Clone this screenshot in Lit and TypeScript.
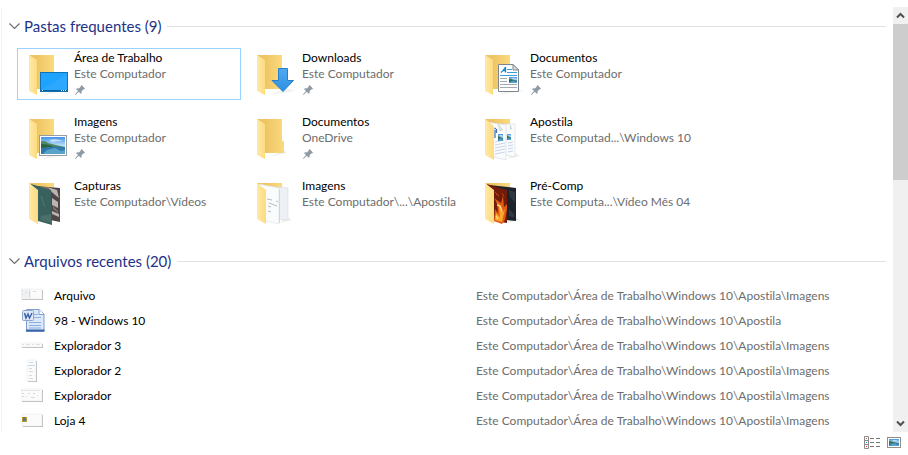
import { LitElement, html, svg, css, type SVGTemplateResult } from "lit";
import { customElement } from "lit/decorators.js";
import { classMap } from "lit/directives/class-map.js";

interface Folder {
  name: string;
  place: string;
  icon: SVGTemplateResult;
  pinned?: boolean;
  selected?: boolean;
}

interface RecentFile {
  name: string;
  path: string;
  icon: SVGTemplateResult;
}

const folderBack = svg`
  <path d="M14 45L40 41L30 38Z" fill="#000" opacity=".05"/>
  <path d="M1 5H26V39H9Z" fill="url(#back)"/>`;
const folderFlap = svg`<path d="M1 5L9 10V45L1 41Z" fill="url(#flap)"/>`;
const filledFlap = svg`<path d="M1 5L10 12V46L1 41Z" fill="url(#flap)"/>`;

const landscape = (x: number, y: number, w: number, h: number) => svg`
  <svg x=${x} y=${y} width=${w} height=${h} viewBox="0 0 24 17" preserveAspectRatio="none">
    <rect width="24" height="17" fill="url(#sky)"/>
    <path d="M0 4.500Q4 3 7 6Q14 8 24 10V11H0Z" fill="#4d8a63"/>
    <path d="M0 7Q8 7 13 10L0 11.500Z" fill="#2c6440"/>
    <path d="M0 11Q12 9 24 10V17H0Z" fill="#2f78ac"/>
    <path d="M6 13L14 11L20 14L24 13V17H2Z" fill="#75bfd8" opacity=".6"/>
    <path d="M8 3Q15 1 22 4Q16 4 11 5Z" fill="#fff" opacity=".6"/>
  </svg>`;

const desktopIcon = svg`${folderBack}${folderFlap}
  <rect x="12.500" y="22.500" width="27" height="19" fill="#1ea3ff" stroke="#0f72b5"/>
  <path d="M13 40L39 24V40Z" fill="#39adff" opacity=".5"/>
  <path d="M13 40.500H39" stroke="#0b5f9c"/>
  <path d="M14 40.500h1M33 40.500h1M35 40.500h1M37 40.500h1" stroke="#fff"/>`;

const downloadsIcon = svg`${folderBack}${folderFlap}
  <path d="M22.500 18.500H31.500V30.500H37.500L27 41.500L16 30.500H22.500Z" fill="url(#arrow)" stroke="#2680c9"/>`;

const documentsIcon = svg`${folderBack}${folderFlap}
  <path d="M14.500 14.500H29L34.500 20V41.500H14.500Z" fill="#fff" stroke="#7d868c"/>
  <path d="M29 14.500V20H34.500Z" fill="#dfe4e7" stroke="#7d868c"/>
  <path d="M17 22.500Q20 20 21.500 17V22.500M19 20.500H22" fill="none" stroke="#1886c8" stroke-width="1.300"/>
  <path d="M23 19.500H28M23 22.500H33M16 25.500H33" stroke="#3aa0dc"/>
  <path d="M16 28.500H23M16 31.500H23M16 34.500H33M16 37.500H33" stroke="#a3a9ad"/>
  ${landscape(25, 27, 8, 6)}`;

const picturesIcon = svg`${folderBack}${folderFlap}
  <rect x="11.500" y="21.500" width="27" height="20" fill="#fff" stroke="#979da2"/>
  ${landscape(13, 23, 24, 17)}`;

const plainIcon = svg`
  <path d="M14 43L31 39L28 36Z" fill="#000" opacity=".06"/>
  <path d="M1 5H26V26L28 28V39H9Z" fill="url(#back)"/>
  ${folderFlap}`;

const pagesIcon = svg`
  <path d="M23 45L36 42L31 39Z" fill="#000" opacity=".07"/>
  <path d="M1 5H26V30H9Z" fill="url(#back)"/>
  <path d="M9 10L31 10V43L22 41L12 30Z" fill="#fafbfc" stroke="#d6dadd" stroke-width=".6"/>
  <path d="M4 8L22 11V46L10 43Z" fill="#fbfcfe" stroke="#d0d6dc" stroke-width=".6"/>
  <path d="M14 10L19 16L16 17ZM26 11L28 15L26 15Z" fill="#dfe3e6" stroke="#c2c8cc" stroke-width=".5"/>
  <path d="M10.500 15L12 14M11 16V24M12.500 15V19" stroke="#3f6fae" stroke-width="1.200"/>
  <path d="M11 28L20 26M11 31L21 29M11 34L21 32M11 37L21 35M11 40L21 38M24 29L29 28M24 32L29 31M24 35L29 34M24 38L29 37" stroke="#c5d5ea" stroke-width="1"/>
  ${landscape(14, 20, 5, 7)}${landscape(23, 20, 4, 6)}
  ${filledFlap}`;

const capturesIcon = svg`
  <path d="M1 5H26V30H9Z" fill="url(#back)"/>
  <path d="M8 8L32 10V44L22 42Z" fill="#4e4647"/>
  <path d="M19 9L29 12L31 20L26 16ZM24 20L30 24V30L24 27ZM24 33L31 36V39L24 36Z" fill="#bcb4b1"/>
  <path d="M12 9L20 9L24 15ZM25 28L30 33V35L25 31Z" fill="#80706d"/>
  <path d="M3 6L23 12L24 47L10 43Z" fill="#39625f"/>
  <path d="M13 38L23 36V45L12 42Z" fill="#4b6f69"/>
  <path d="M13 18L17 29" stroke="#56807b" stroke-width=".7"/>
  ${filledFlap}`;

const whitePagesIcon = svg`
  <path d="M1 5H26V30H9Z" fill="url(#back)"/>
  <path d="M23 45L36 42L31 39Z" fill="#000" opacity=".07"/>
  <path d="M9 8L32 10V42L20 41Z" fill="#edf0f4" stroke="#d5d9dd" stroke-width=".6"/>
  <path d="M3 6L23 10V46L10 43Z" fill="#fafbfc" stroke="#dcdfe2" stroke-width=".6"/>
  <path d="M11 21L16 22M13 25L21 28M12 28L15 29M12 33L15 34M20 23L22 24" stroke="#b6babd"/>
  <path d="M23.500 12V45" stroke="#d0d5da"/>
  ${filledFlap}`;

const fireIcon = svg`
  <path d="M23 45L36 42L31 39Z" fill="#000" opacity=".08"/>
  <path d="M1 5H26V30H9Z" fill="url(#back)"/>
  <path d="M5 7L32 10V43L22 42Z" fill="#1d222b"/>
  <path d="M25 12L31 14V24L26 19ZM25 31L30 36V40L25 38Z" fill="#303844"/>
  <path d="M3 6L23 12V45L10 43Z" fill="#6f1c0b"/>
  <path d="M10 43L11 31L14 35L13 25L10 20L17 25L19 18L20 29L23 26V31L21 42L18 46Z" fill="#df5c15"/>
  <path d="M11 42L12 35L16 39L15 29L12 24L17 28L19 34L21 31L18 44Z" fill="#fba62c"/>
  <path d="M13 27L16 28L18 33M12 38L14 41" stroke="#ffe083" stroke-width="1.200" fill="none"/>
  <path d="M11 14L15 18L12 16M18 15L20 19" stroke="#c03c12" fill="none"/>
  ${filledFlap}`;

/* Sheet of a thumbnail with its soft right and bottom shadow. */
const sheet = (x: number, y: number, w: number, h: number) => svg`
  <rect x=${x + 1} y=${y + 1} width=${w} height=${h} fill="#b9b9b9"/>
  <rect x=${x} y=${y} width=${w} height=${h} fill="#fbfbfb" stroke="#e6e6e6" stroke-width=".5"/>`;

const thumbArchive = svg`${sheet(0, 6, 21, 10)}
  <rect x="0" y="6" width="10" height="10" fill="#f0f1f2"/>
  <path d="M1 7.500V9M1 11.500H2M4 9.500H6M8.500 8V14M12 8.500H15" stroke="#d5dae0"/>`;
const thumbWord = svg`
  <path d="M5.500 1.500H18L23 6V23.500H5.500Z" fill="#dce8f8" stroke="#7f9fd2"/>
  <path d="M18 1.500V6.500H23" fill="#fff" stroke="#7f9fd2"/>
  <path d="M13 6.500H17M13 9.500H20M8 14.500H20M8 17.500H20M8 20H20" stroke="#8aaee2"/>
  <path d="M5 22.500H23.500" stroke="#3c64a9" stroke-width="2"/>
  <rect x="1.500" y="2.500" width="11" height="10" rx="1" fill="#dfe9f8" stroke="#8ea5cc"/>
  <path d="M3.500 5L5 10L7 6L8.500 10L11 5" fill="none" stroke="#3a5ea8" stroke-width="1.400"/>`;
const thumbStrip = svg`${sheet(0, 10, 21, 4)}
  <path d="M1 11.500H3M5 11.500H9M11 11.500H13M15 11.500H19" stroke="#dde1e4"/>`;
const thumbTall = svg`${sheet(6, 2, 9, 21)}
  <path d="M8 4.500H12M7 7.500H14" stroke="#c6d9ea"/>
  <path d="M8 10.500H11M8 13.500H12M8 17.500H11M8 20.500H12" stroke="#d8dbde"/>`;
const thumbWindow = svg`${sheet(0, 6, 21, 12)}
  <path d="M0 7.500H19" stroke="#e3e6e8"/>
  <path d="M1 10.500H3M1 13.500H3M7 10.500H9M12 10.500H14M16 12.500H17M5 13.500H6M10 14.500H14" stroke="#d6dbdf"/>`;
const thumbStore = svg`${sheet(1, 6, 20, 12)}
  <rect x="1" y="9" width="5" height="5" fill="#b59a3a"/>
  <rect x="2" y="10" width="3" height="3" fill="#4d7ca4"/>
  <path d="M2 9.500H4" stroke="#c4542d"/>`;

const imagesPath = "Este Computador\\Área de Trabalho\\Windows 10\\Apostila\\Imagens";

const folders: Folder[] = [
  { name: "Área de Trabalho", place: "Este Computador", icon: desktopIcon, pinned: true, selected: true },
  { name: "Downloads", place: "Este Computador", icon: downloadsIcon, pinned: true },
  { name: "Documentos", place: "Este Computador", icon: documentsIcon, pinned: true },
  { name: "Imagens", place: "Este Computador", icon: picturesIcon, pinned: true },
  { name: "Documentos", place: "OneDrive", icon: plainIcon, pinned: true },
  { name: "Apostila", place: "Este Computad...\\Windows 10", icon: pagesIcon },
  { name: "Capturas", place: "Este Computador\\Vídeos", icon: capturesIcon },
  { name: "Imagens", place: "Este Computador\\...\\Apostila", icon: whitePagesIcon },
  { name: "Pré-Comp", place: "Este Computa...\\Vídeo Mês 04", icon: fireIcon },
];

const files: RecentFile[] = [
  { name: "Arquivo", path: imagesPath, icon: thumbArchive },
  { name: "98 - Windows 10", path: "Este Computador\\Área de Trabalho\\Windows 10\\Apostila", icon: thumbWord },
  { name: "Explorador 3", path: imagesPath, icon: thumbStrip },
  { name: "Explorador 2", path: imagesPath, icon: thumbTall },
  { name: "Explorador", path: imagesPath, icon: thumbWindow },
  { name: "Loja 4", path: imagesPath, icon: thumbStore },
];

const gradients = svg`
  <defs>
    <linearGradient id="back"><stop offset=".3" stop-color="#edc463"/><stop offset="1" stop-color="#fbda7e"/></linearGradient>
    <linearGradient id="flap"><stop offset="0" stop-color="#ffe9a6"/><stop offset="1" stop-color="#fddb80"/></linearGradient>
    <linearGradient id="sky" x2="0" y2="1"><stop offset="0" stop-color="#4292e6"/><stop offset=".5" stop-color="#b9dff8"/></linearGradient>
    <linearGradient id="arrow" x2="0" y2="1"><stop offset="0" stop-color="#4fa9f1"/><stop offset="1" stop-color="#2d8fe2"/></linearGradient>
  </defs>`;

@customElement("app-root")
export class AppRoot extends LitElement {
  static styles = css`
    :host {
      display: flex;
      flex-direction: column;
      box-sizing: border-box;
      height: 100vh;
      padding-top: 7px;
      background: #fff;
      color: #000;
      font: 12px/16px Lato, "Open Sans", sans-serif;
      font-variant-ligatures: none;
    }
    * { box-sizing: border-box; }
    svg { display: block; flex: none; }
    button {
      display: flex;
      align-items: center;
      justify-content: center;
      padding: 0;
      border: 0;
      background: none;
      color: inherit;
      font: inherit;
      font-variant-ligatures: none;
    }
    a { color: inherit; text-decoration: none; }
    ul { margin: 0; padding: 0; list-style: none; }
    .window { display: flex; flex: 1; min-height: 0; }
    .content {
      flex: 1;
      min-width: 0;
      margin-left: 1px;
      padding: 7px 7px 0;
      border-left: 1px solid #f2f2f2;
      overflow: hidden;
    }
    .heading {
      display: flex;
      align-items: center;
      gap: 6px;
      height: 24px;
      margin: 0;
      font-weight: 400;
    }
    .heading::after { content: ""; flex: 1; height: 1px; background: #e2e2e2; }
    .toggle { gap: 4px; color: #1e3287; font-size: 15px; line-height: 24px; }
    .tiles {
      display: grid;
      grid-template-columns: repeat(auto-fill, 224px);
      gap: 12px 4px;
      padding: 10px 0 21px 8px;
    }
    .tile {
      display: flex;
      gap: 2px;
      height: 52px;
      padding: 1px 0 0 10px;
      border: 1px solid transparent;
      white-space: nowrap;
    }
    .tile.selected { border-color: #99d1ff; }
    .label { display: flex; flex-direction: column; }
    .muted { color: #6d6d6d; }
    .pin { margin-top: 2px; }
    .files { padding: 10px 0 0 12px; }
    .file {
      display: grid;
      grid-template-columns: 24px minmax(0, 413px) 1fr;
      column-gap: 9px;
      align-items: center;
      height: 25px;
      white-space: nowrap;
    }
    .scrollbar {
      display: flex;
      flex-direction: column;
      width: 15px;
      background: #f0f0f0;
    }
    .step { height: 17px; }
    .track { flex: 1; }
    .thumb { height: 40%; background: #cdcdcd; }
    .status {
      display: flex;
      justify-content: flex-end;
      gap: 6px;
      height: 23px;
      padding: 3px 6px 0 0;
    }
    .view { height: 16px; }
  `;

  private heading(text: string) {
    return html`<h2 class="heading">
      <button class="toggle" aria-expanded="true">
        <svg width="11" height="8" viewBox="0 0 11 8" aria-hidden="true">
          <path d="M.5 1.500L5.500 6.500L10.500 1.500" fill="none" stroke="#6e6e6e" stroke-width="1.200" />
        </svg>
        ${text}
      </button>
    </h2>`;
  }

  private tile(folder: Folder) {
    return html`<li>
      <a href="#" class=${classMap({ tile: true, selected: !!folder.selected })}>
        <svg width="44" height="48" viewBox="0 0 44 48" aria-hidden="true">${gradients}${folder.icon}</svg>
        <span class="label">
          <span>${folder.name}</span>
          <span class="muted">${folder.place}</span>
          ${folder.pinned
            ? html`<svg class="pin" width="12" height="12" viewBox="0 0 12 12" aria-hidden="true">
                <path d="M7.500 1L11 4.500L10 5.500L9.500 5.200L7.500 7.200Q8 9 7 10L4.800 7.800L1.500 11L1 10.500L4 7L2 5Q3 4 4.900 4.500L6.900 2.500L6.500 2Z" fill="#8d99a3" />
              </svg>`
            : ""}
        </span>
      </a>
    </li>`;
  }

  private file(file: RecentFile) {
    return html`<li>
      <a href="#" class="file">
        <svg width="24" height="25" viewBox="0 0 24 25" aria-hidden="true">${file.icon}</svg>
        <span>${file.name}</span>
        <span class="muted">${file.path}</span>
      </a>
    </li>`;
  }

  private step(label: string, d: string) {
    return html`<button class="step" aria-label=${label}>
      <svg width="9" height="7" viewBox="0 0 9 7" aria-hidden="true">
        <path d=${d} fill="none" stroke="#505050" stroke-width="2" />
      </svg>
    </button>`;
  }

  render() {
    return html`
      <div class="window">
        <main class="content">
          <section>
            ${this.heading("Pastas frequentes (9)")}
            <ul class="tiles">${folders.map((f) => this.tile(f))}</ul>
          </section>
          <section>
            ${this.heading("Arquivos recentes (20)")}
            <ul class="files">${files.map((f) => this.file(f))}</ul>
          </section>
        </main>
        <div class="scrollbar">
          ${this.step("Rolar para cima", "M1 5.500L4.500 2L8 5.500")}
          <div class="track"><div class="thumb"></div></div>
          ${this.step("Rolar para baixo", "M1 1.500L4.500 5L8 1.500")}
        </div>
      </div>
      <footer class="status">
        <button class="view" aria-label="Detalhes">
          <svg width="17" height="14" viewBox="0 0 17 14" aria-hidden="true">
            <path d="M.5 .5H4.500V12.500H.5ZM.5 4.500H4.500M.5 8.500H4.500" fill="#fff" stroke="#8a8a8a" />
            <path d="M6 2.500H10M12 2.500H16M6 6.500H10M12 6.500H16M6 10.500H10M12 10.500H16" stroke="#777" />
            <path d="M2 2.500H3" stroke="#b06a4a" /><path d="M2 6.500H3" stroke="#3a8fd0" /><path d="M2 10.500H3" stroke="#d22" />
          </svg>
        </button>
        <button class="view" aria-label="Ícones grandes">
          <svg width="15" height="12" viewBox="0 0 15 12" aria-hidden="true">
            ${gradients}
            <rect x=".5" y=".5" width="13" height="10" fill="#fff" stroke="#8f8f8f" />
            ${landscape(2, 2, 10, 7)}
          </svg>
        </button>
      </footer>
    `;
  }
}
